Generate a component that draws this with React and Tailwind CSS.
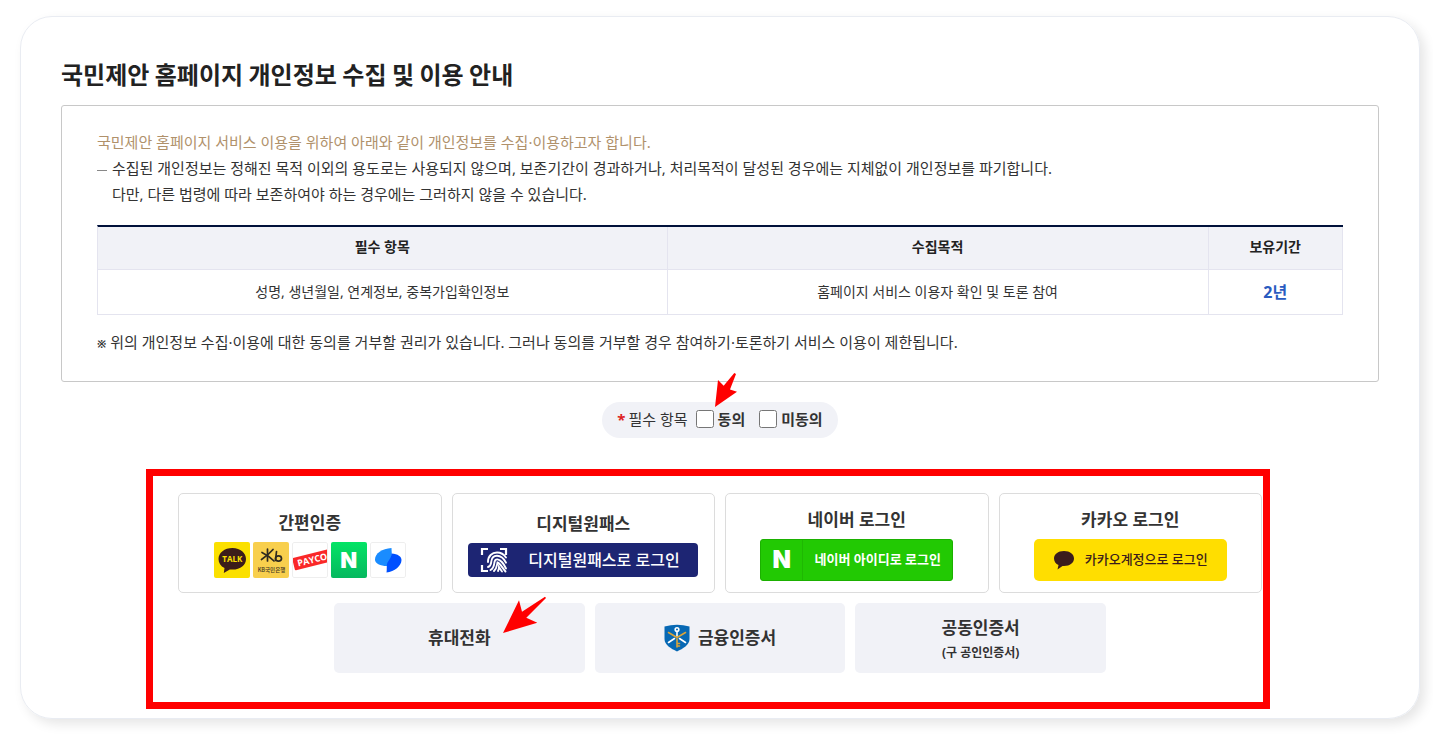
import React, { useState } from "react";

const KakaoTile = () => (
  <svg viewBox="0 0 36 36" className="w-9 h-9 rounded-xs bg-[#fbe000]" aria-hidden="true">
    <path
      d="M18.500 6C10.500 6 4.500 10.800 4.500 17c0 4 2.200 7.200 6 9.100L9.800 31l6-3.600c1 .2 1.700.2 2.700.2 8 0 13.500-4.600 13.500-10.600S26.500 6 18.500 6z"
      fill="#3b1d1a"
    />
    <text
      x="18.300"
      y="20"
      textAnchor="middle"
      fontFamily="Open Sans, sans-serif"
      fontSize="8"
      fontWeight="700"
      fill="#fbe000"
    >
      TALK
    </text>
  </svg>
);

const KbTile = () => (
  <svg viewBox="0 0 36 36" className="w-9 h-9 rounded-xs bg-[#f8cf4d]" aria-hidden="true">
    <g stroke="#2f2a20" strokeWidth="1.700" fill="none" strokeLinecap="round">
      <path d="M14.500 7v12" />
      <path d="M20 7.500C17 11 13 14.500 8.500 17.500" />
      <path d="M9 10.500c4 2 8 4.500 12 8.500" />
      <path d="M23.500 9.500l-1 9" />
      <ellipse cx="25.500" cy="16.500" rx="3" ry="2.600" />
    </g>
    <text
      x="18.500"
      y="30"
      textAnchor="middle"
      fontFamily="Noto Sans CJK KR, sans-serif"
      fontSize="5.500"
      fontWeight="500"
      fill="#3a3222"
    >
      KB국민은행
    </text>
  </svg>
);

const PaycoTile = () => (
  <svg viewBox="0 0 36 36" className="w-9 h-9 rounded-xs bg-white" aria-hidden="true">
    <g transform="rotate(-14 18 18)">
      <rect x="1" y="12" width="44" height="12.500" rx="1" fill="#fa2828" />
      <text
        x="5"
        y="21.500"
        fontFamily="Open Sans, sans-serif"
        fontSize="9"
        fontWeight="700"
        fill="#fff"
      >
        PAYCO
      </text>
    </g>
    <rect x="0.500" y="0.500" width="35" height="35" rx="1.500" fill="none" stroke="#eee" />
  </svg>
);

const NaverTile = () => (
  <span className="flex items-center justify-center w-9 h-9 rounded-xs bg-linear-to-b from-[#03e465] to-[#06b85f] font-[Inter,sans-serif] font-black text-[22px] leading-none text-white">
    N
  </span>
);

const TossTile = () => (
  <svg viewBox="0 0 36 36" className="w-9 h-9 rounded-xs bg-white" aria-hidden="true">
    <path d="M21.500 6C12 6.500 5 11.500 5 17.500c0 4 5 6.500 12 6.500l5-7z" fill="#1a8cff" />
    <path
      d="M21.500 11.500c6.500.5 10 3 10 6.500 0 6-7 11.500-15 12.500.5-3 0-6 .5-8.500 1-3.500 4.500-5.500 4.500-10.500z"
      fill="#0050ff"
    />
    <rect x="0.500" y="0.500" width="35" height="35" rx="1.500" fill="none" stroke="#eee" />
  </svg>
);

const FingerprintIcon = () => (
  <svg viewBox="0 0 28 26" className="w-7 h-[26px] shrink-0" fill="none" stroke="#fff" aria-hidden="true">
    <path d="M2 8V2h6M2 18v6h6M20 2h6v6" strokeWidth="2.200" />
    <g strokeWidth="1.900" strokeLinecap="round">
      <path d="M8 15c0-6 4-9.500 9-9.500 4 0 7 2 9 5" />
      <path d="M8 20c3-1 3-3 3.300-5.500C11.700 10.500 14 8.700 17 8.700c4.500 0 7 3 9 7" />
      <path d="M10.500 23c3.500-2 3.500-5 4-8 .4-2 1.500-2.800 3-2.600 4 .5 6 4.500 8.500 9" />
      <path d="M14 24c3-3 2.800-5.500 3.500-8.500 3 1 4.500 5 8 9" />
      <path d="M18 24c.8-1.500 1-2.500 1-4 1 1.500 1.800 3 3 4.500" />
    </g>
  </svg>
);

const TalkIcon = () => (
  <svg viewBox="0 0 22 20" className="w-[22px] h-5 shrink-0" aria-hidden="true">
    <path
      d="M11 1C5 1 1 4.200 1 8.500c0 2.900 1.800 5.300 4.500 6.600L4.500 19.500l5-3.500H11c6 0 10-3.200 10-7.500S17 1 11 1z"
      fill="#3b1c1c"
    />
  </svg>
);

const ShieldIcon = () => (
  <svg viewBox="0 0 26 28" className="w-[26px] h-7 shrink-0" fill="none" aria-hidden="true">
    <path d="M.5 2.500Q13-1 25.500 2.500V15c0 6-6.500 9.500-12.500 12.500C7 24.500.5 21 .5 15z" fill="#0768b4" />
    <g strokeWidth="1.600" strokeLinecap="round">
      <path d="M4.500 18.500l6-4M21.500 18.500l-6-4" stroke="#fff" />
      <circle cx="13" cy="5.500" r="1.800" stroke="#fff" />
      <path d="M13 7.500v5" stroke="#fff" />
      <path d="M4.500 8.500L13 13.500l8.500-5M13 13.500V23M13 19.500h2.500M13 22h2.500" stroke="#d9a43a" />
    </g>
  </svg>
);

const LoginCard = ({ title, children }) => (
  <div className="flex flex-col items-center justify-center gap-1 h-[100px] border border-[#dcdcdc] rounded-[5px]">
    <h3 className="text-[17px] leading-[30px] font-bold">{title}</h3>
    {children}
  </div>
);

const columns = ["필수 항목", "수집목적", "보유기간"];

const App = () => {
  const [agree, setAgree] = useState(null);

  return (
    <main className="bg-white pt-4 pb-4 pl-5 pr-[13px] font-['Noto_Sans','Noto_Sans_CJK_KR',sans-serif] text-[#333]">
      <section className="border border-[#e9ecf2] rounded-[32px] px-10 pt-[39px] pb-[9px] shadow-[5px_5px_12px_rgba(0,0,0,0.1)]">
        <h1 className="mb-[13px] font-['Noto_Sans_CJK_KR',sans-serif] text-2xl leading-9 font-bold text-[#222]">
          국민제안 홈페이지 개인정보 수집 및 이용 안내
        </h1>

        <div className="border border-[#c8c8c8] rounded-[3px] px-[35px] pt-[23px] pb-[26px] text-[15px] leading-[26px]">
          <p className="text-[#b0916b]">
            국민제안 홈페이지 서비스 이용을 위하여 아래와 같이 개인정보를 수집·이용하고자 합니다.
          </p>
          <div className="flex gap-[5px]">
            <span className="w-2.5 h-px mt-[15px] shrink-0 bg-[#888]" />
            <p>
              수집된 개인정보는 정해진 목적 이외의 용도로는 사용되지 않으며, 보존기간이 경과하거나,
              처리목적이 달성된 경우에는 지체없이 개인정보를 파기합니다.
              <br />
              다만, 다른 법령에 따라 보존하여야 하는 경우에는 그러하지 않을 수 있습니다.
            </p>
          </div>

          <table className="w-full mt-[18px] table-fixed border-separate border-spacing-0 border-t-2 border-t-[#00113a] border-l border-l-[#e4e4ef] text-center text-sm">
            <colgroup>
              <col className="w-[45.75%]" />
              <col className="w-[43.45%]" />
              <col className="w-[10.8%]" />
            </colgroup>
            <thead>
              <tr className="h-[43px] bg-[#f1f2f7] text-[#222]">
                {columns.map((column) => (
                  <th
                    key={column}
                    scope="col"
                    className="pb-0.5 border-r border-b border-[#e4e4ef] font-bold"
                  >
                    {column}
                  </th>
                ))}
              </tr>
            </thead>
            <tbody>
              <tr className="h-[45px]">
                <td className="border-r border-b border-[#e4e4ef]">
                  성명, 생년월일, 연계정보, 중복가입확인정보
                </td>
                <td className="border-r border-b border-[#e4e4ef]">
                  홈페이지 서비스 이용자 확인 및 토론 참여
                </td>
                <td className="border-r border-b border-[#e4e4ef] text-base font-bold text-[#2a5bc0]">
                  2년
                </td>
              </tr>
            </tbody>
          </table>

          <p className="mt-3.5">
            <span className="text-[11px] leading-none font-bold">※</span> 위의 개인정보 수집·이용에
            대한 동의를 거부할 권리가 있습니다. 그러나 동의를 거부할 경우 참여하기·토론하기 서비스
            이용이 제한됩니다.
          </p>
        </div>

        <div className="flex items-center w-fit h-9 mt-5 mx-auto px-[15px] pb-0.5 rounded-full bg-[#f1f2f7] text-[15px]">
          <span className="mr-[3px] font-bold text-[#d22]">*</span>
          <span className="mr-2">필수 항목</span>
          <div className="relative flex items-center mr-3.5">
            <input
              id="agree"
              type="checkbox"
              className="w-[18px] h-[18px] mr-1"
              checked={agree === true}
              onChange={() => setAgree(true)}
            />
            <label htmlFor="agree" className="font-bold">
              동의
            </label>
            <svg
              viewBox="0 0 24 36"
              className="absolute left-[18px] bottom-[22px] w-6 h-9 pointer-events-none"
              aria-hidden="true"
            >
              <path d="M1 35L4 8l5.700 5.700L20.300 1l1.700 1-6 15.500 7 2.200z" fill="#f00" />
            </svg>
          </div>
          <input
            id="disagree"
            type="checkbox"
            className="w-[18px] h-[18px] mr-1"
            checked={agree === false}
            onChange={() => setAgree(false)}
          />
          <label htmlFor="disagree" className="font-bold">
            미동의
          </label>
        </div>

        <div className="mt-[31px] ml-[85px] mr-[109px] pt-[17px] pb-[29px] pl-[25px] pr-px border-[7px] border-[#f00]">
          <div className="grid grid-cols-4 gap-2.5">
            <LoginCard title="간편인증">
              <button type="button" aria-label="간편인증" className="flex gap-[3px]">
                <KakaoTile />
                <KbTile />
                <PaycoTile />
                <NaverTile />
                <TossTile />
              </button>
            </LoginCard>
            <LoginCard title="디지털원패스">
              <button
                type="button"
                className="flex items-center w-[230px] h-[34px] pl-3 rounded-sm bg-[#1d2573] text-base font-medium text-white"
              >
                <FingerprintIcon />
                <span className="ml-5">디지털원패스로 로그인</span>
              </button>
            </LoginCard>
            <LoginCard title="네이버 로그인">
              <button
                type="button"
                className="flex items-center w-[193px] h-[42px] border border-[#1bb000] rounded-[3px] bg-[#22c903] text-[13px] font-bold text-white"
              >
                <span className="flex items-center justify-center w-[42px] h-full border-r border-[#1fb803] font-[Inter,sans-serif] font-black text-2xl">
                  N
                </span>
                <span className="flex-1">네이버 아이디로 로그인</span>
              </button>
            </LoginCard>
            <LoginCard title="카카오 로그인">
              <button
                type="button"
                className="flex items-center justify-center gap-2.5 w-[193px] h-[42px] rounded-[5px] bg-[#ffde00] text-[13px] font-medium text-[#3b1c1c]"
              >
                <TalkIcon />
                카카오계정으로 로그인
              </button>
            </LoginCard>
          </div>

          <div className="grid grid-cols-3 gap-2.5 max-w-[772px] mt-2.5 mx-auto text-[17px] font-bold">
            <div className="relative">
              <button type="button" className="w-full h-[70px] rounded-[5px] bg-[#f1f2f7]">
                휴대전화
              </button>
              <svg
                viewBox="0 0 44 38"
                className="absolute right-[38px] -top-[7px] w-11 h-[38px] pointer-events-none"
                aria-hidden="true"
              >
                <path d="M0 37L16 4.300l3 11.400L42 .7l1 1.300-19.700 19.700 11 5z" fill="#f00" />
              </svg>
            </div>
            <button
              type="button"
              className="flex items-center justify-center gap-2 h-[70px] rounded-[5px] bg-[#f1f2f7]"
            >
              <ShieldIcon />
              금융인증서
            </button>
            <button type="button" className="h-[70px] rounded-[5px] bg-[#f1f2f7]">
              <span className="block leading-[30px]">공동인증서</span>
              <span className="block text-xs leading-5">(구 공인인증서)</span>
            </button>
          </div>
        </div>
      </section>
    </main>
  );
};

export default App;
